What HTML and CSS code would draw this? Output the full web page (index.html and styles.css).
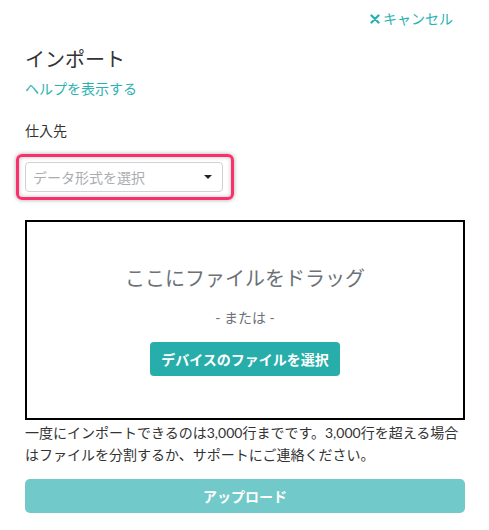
FILE: index.html
```html
<!DOCTYPE html>
<html lang="ja">
<head>
<meta charset="utf-8">
<link rel="stylesheet" href="styles.css">
</head>
<body>
<div class="page">
  <div class="top">
    <a class="cancel" href="#"><svg class="x-icon" viewBox="0 0 10 10" width="10" height="10"><path d="M1.5 1.5 L8.5 8.5 M8.5 1.5 L1.5 8.5" stroke="currentColor" stroke-width="2.4" stroke-linecap="round"/></svg>キャンセル</a>
  </div>
  <h1 class="title">インポート</h1>
  <a class="help" href="#">ヘルプを表示する</a>
  <div class="label">仕入先</div>
  <div class="select-wrap">
    <div class="select">
      <span class="placeholder">データ形式を選択</span>
      <span class="caret"></span>
    </div>
    <div class="highlight"></div>
  </div>
  <div class="dropzone">
    <div class="drag">ここにファイルをドラッグ</div>
    <div class="or">- または -</div>
    <button class="choose">デバイスのファイルを選択</button>
  </div>
  <p class="note">一度にインポートできるのは3,000行までです。3,000行を超える場合はファイルを分割するか、サポートにご連絡ください。</p>
  <button class="upload">アップロード</button>
</div>
</body>
</html>
```

FILE: styles.css
```css
* { box-sizing: border-box; }
body {
  margin: 0;
  background: #fff;
  font-family: "Lato", "Noto Sans CJK JP", sans-serif;
  font-size: 14px;
  color: #333;
}
.page {
  padding: 8px 24px 0 25px;
}
.top {
  display: flex;
  justify-content: flex-end;
  padding-right: 12px;
  height: 22px;
  line-height: 22px;
}
.cancel {
  display: flex;
  align-items: center;
  gap: 3px;
  color: #2bb1b1;
  text-decoration: none;
  font-size: 14px;
}
.x-icon { display: block; }
.title {
  margin: 15px 0 0;
  font-size: 20px;
  line-height: 28px;
  font-weight: normal;
  color: #333;
}
.help {
  display: block;
  margin-top: 6px;
  line-height: 20px;
  color: #2bb1b1;
  text-decoration: none;
}
.label {
  margin-top: 22px;
  line-height: 20px;
  color: #333;
}
.select-wrap {
  position: relative;
  margin-top: 21px;
  width: 198px;
}
.select {
  display: flex;
  align-items: center;
  justify-content: space-between;
  height: 30px;
  border: 1px solid #cfd2d4;
  border-radius: 4px;
  padding: 0 10px 0 7px;
  background: #fff;
}
.placeholder { color: #a9adb0; }
.caret {
  width: 0;
  height: 0;
  border-left: 4px solid transparent;
  border-right: 4px solid transparent;
  border-top: 4px solid #222;
}
.highlight {
  position: absolute;
  left: -9px;
  top: -8px;
  right: -11px;
  bottom: -8px;
  border: 3px solid #fb2f6c;
  border-radius: 6px;
  box-shadow: 0 0 4px rgba(0,0,0,0.35), inset 0 0 4px rgba(0,0,0,0.25);
  pointer-events: none;
}
.dropzone {
  margin-top: 28px;
  height: 200px;
  border: 2px solid #000;
  display: flex;
  flex-direction: column;
  align-items: center;
  justify-content: center;
}
.drag {
  font-size: 20px;
  line-height: 28px;
  color: #6b7177;
}
.or {
  margin-top: 16px;
  line-height: 20px;
  color: #6b7177;
}
.choose {
  margin-top: 14px;
  height: 34px;
  padding: 0 11px;
  border: none;
  border-radius: 4px;
  background: #27aeaa;
  color: #fff;
  font-family: inherit;
  font-size: 14px;
  font-weight: bold;
}
.note {
  margin: 2px 0 0;
  line-height: 22px;
  color: #333;
}
.upload {
  display: block;
  width: 100%;
  margin-top: 13px;
  height: 34px;
  border: none;
  border-radius: 5px;
  background: #72c9c9;
  color: #fff;
  font-family: inherit;
  font-size: 14px;
  font-weight: bold;
}
```
